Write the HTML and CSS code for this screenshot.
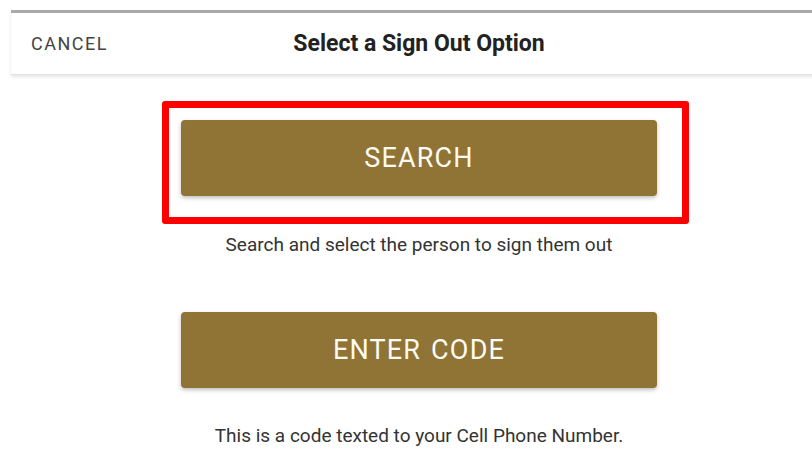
FILE: index.html
```html
<!DOCTYPE html>
<html lang="en">
<head>
    <meta charset="UTF-8">
    <meta name="viewport" content="width=device-width, initial-scale=1.0">
    <title>Select a Sign Out Option</title>
    <link rel="stylesheet" href="styles.css">
</head>
<body>
    <div class="dialog">
        <div class="header">
            <a class="cancel" href="#">CANCEL</a>
            <h1>Select a Sign Out Option</h1>
            <span></span>
        </div>
        <div class="content">
            <div class="highlight">
                <button class="option">SEARCH</button>
            </div>
            <p class="hint">Search and select the person to sign them out</p>

            <button class="option second">ENTER CODE</button>
            <p class="hint last">This is a code texted to your Cell Phone Number.</p>
        </div>
    </div>
</body>
</html>
```

FILE: styles.css
```css
body {
    margin: 0;
    padding: 10px 0 0 11px;
    font-family: Roboto, "Liberation Sans", sans-serif;
    background-color: #ffffff;
    color: #333333;
    overflow: hidden;
    height: 462px;
}

.dialog {
    width: 816px;
}

.header {
    display: grid;
    grid-template-columns: 1fr auto 1fr;
    align-items: center;
    height: 61px;
    border-top: 3px solid #a9a9a9;
    border-bottom: 1px solid #e2e2e2;
    box-shadow: 0 2px 3px rgba(0,0,0,0.10);
    padding: 0 20px;
}

.cancel {
    font-size: 18px;
    letter-spacing: 1.5px;
    color: #444444;
    text-decoration: none;
}

h1 {
    margin: 0;
    font-size: 23px;
    font-weight: 700;
    color: #222222;
}

.content {
    display: flex;
    flex-direction: column;
    align-items: center;
}

.highlight {
    margin-top: 26px;
    margin-left: -19px;
    margin-right: -32px;
    padding: 12px 25px 21px 12px;
    border: 7px solid #ff0000;
    border-radius: 3px;
}

.option {
    display: block;
    width: 476px;
    height: 76px;
    border: none;
    border-radius: 4px;
    background-color: #8f7436;
    color: #fdfbf4;
    font-family: Roboto, "Liberation Sans", sans-serif;
    font-size: 27px;
    letter-spacing: 1.2px;
    word-spacing: 2px;
    box-shadow: 0 2px 4px rgba(0,0,0,0.25);
    cursor: pointer;
}

.second {
    margin-top: 56px;
}

.hint {
    margin: 10px 0 0;
    font-size: 19px;
    line-height: 22px;
}

.hint.last {
    margin-top: 37px;
}
```
